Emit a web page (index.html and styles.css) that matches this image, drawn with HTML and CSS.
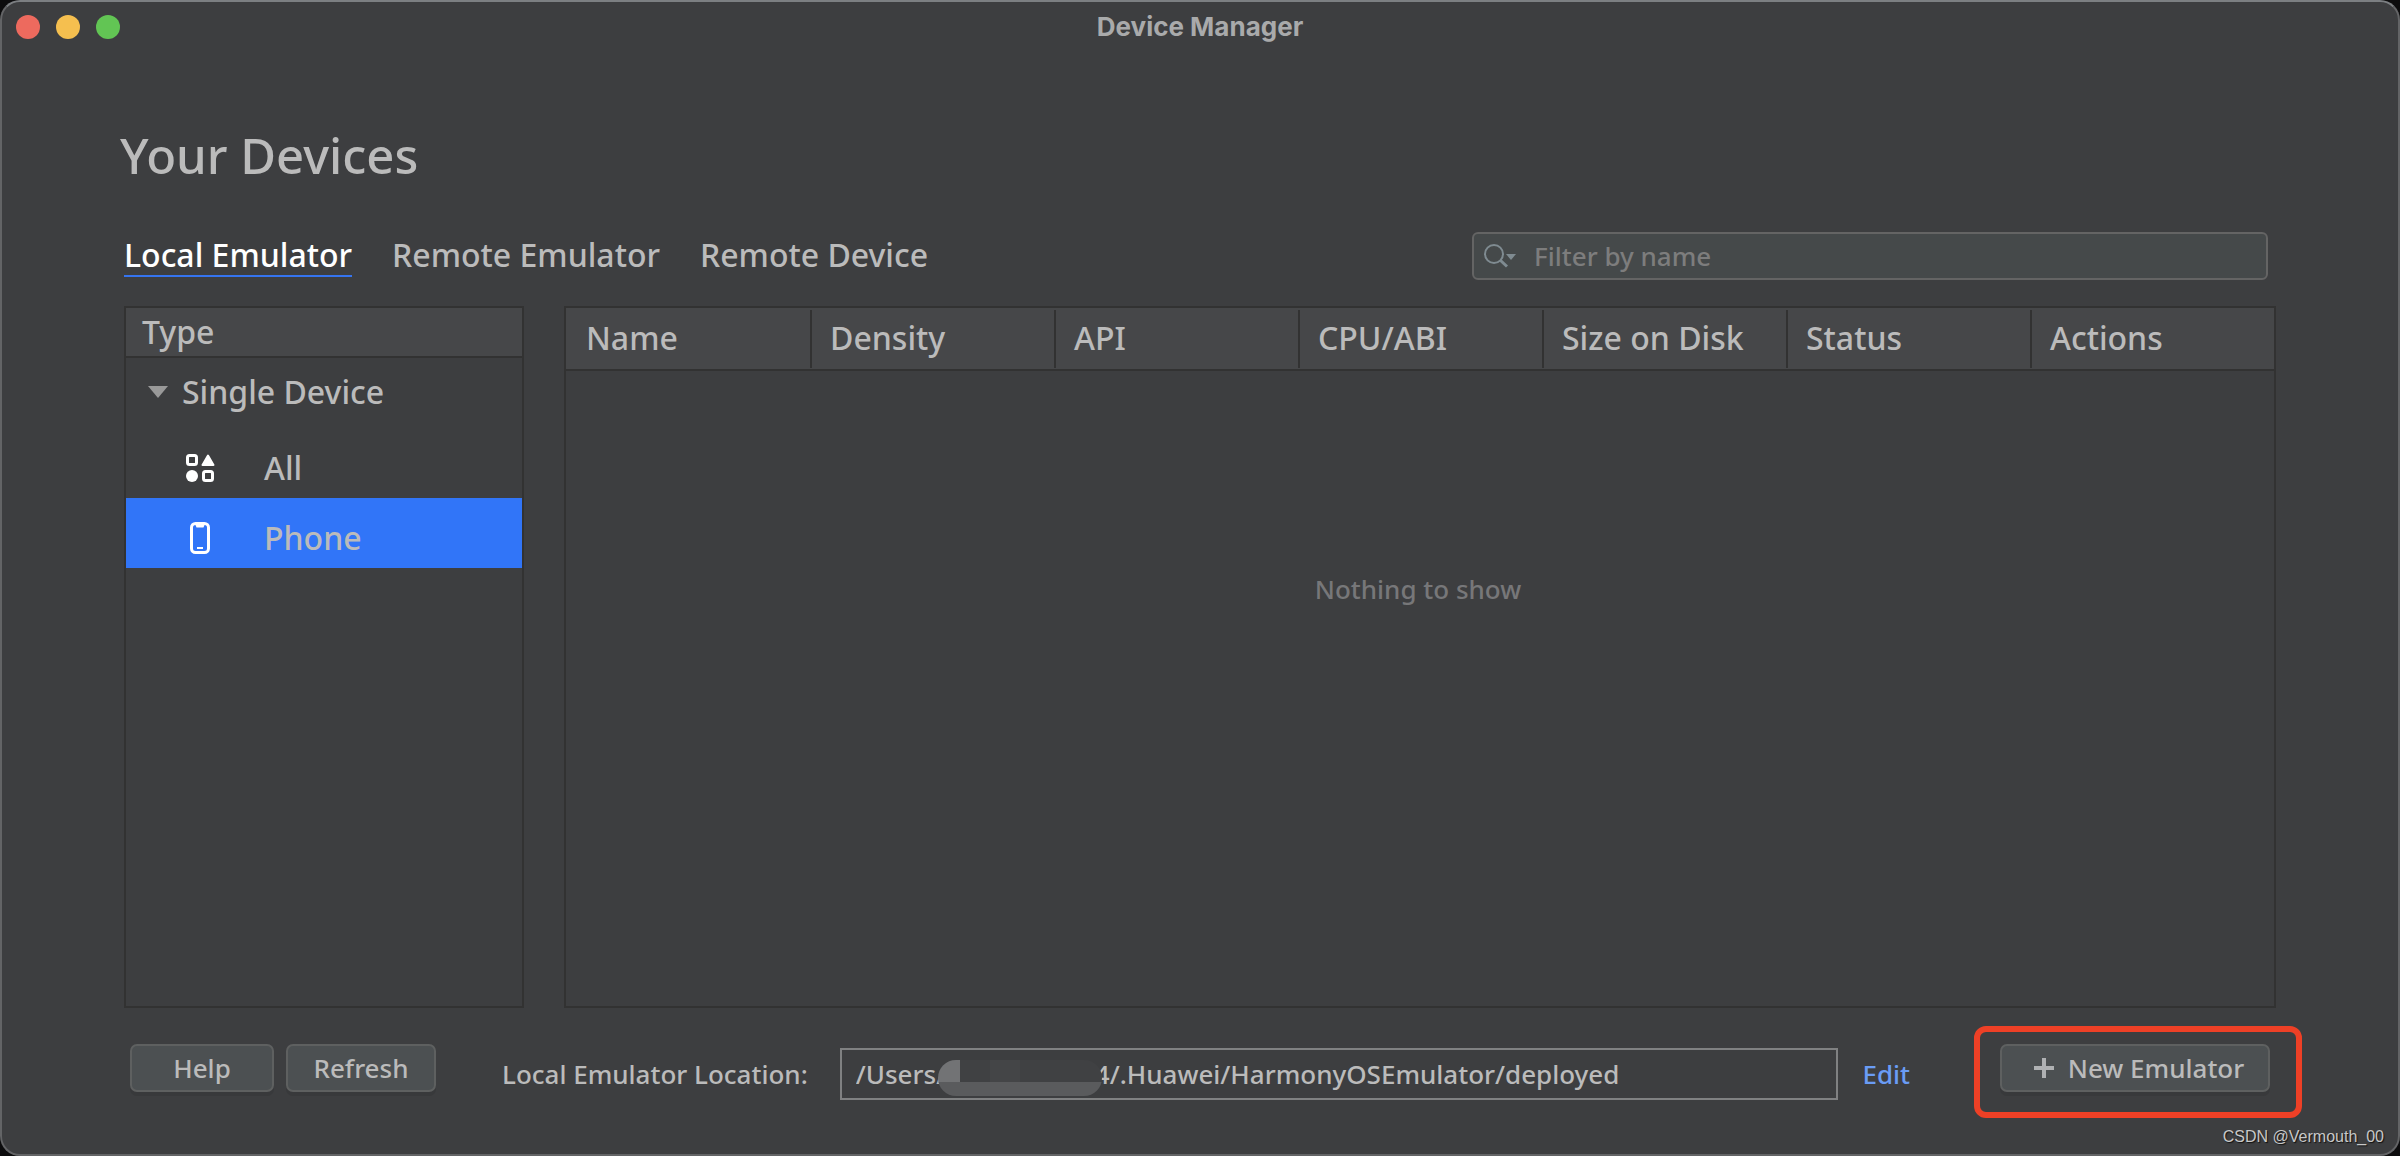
FILE: index.html
```html
<!DOCTYPE html>
<html lang="en">
<head>
<meta charset="utf-8">
<title>Device Manager</title>
<link rel="stylesheet" href="styles.css">
</head>
<body>
<div class="window">
  <header class="titlebar">
    <div class="lights">
      <button class="light light-close" aria-label="Close"></button>
      <button class="light light-min" aria-label="Minimize"></button>
      <button class="light light-max" aria-label="Zoom"></button>
    </div>
    <span class="title">Device Manager</span>
  </header>

  <main class="content">
    <h1 class="heading">Your Devices</h1>

    <div class="toolbar">
      <nav class="tabs">
        <a class="tab tab-active" href="#local">Local Emulator</a>
        <a class="tab" href="#remote">Remote Emulator</a>
        <a class="tab" href="#device">Remote Device</a>
      </nav>
      <label class="filter">
        <svg class="filter-icon" width="36" height="28" viewBox="0 0 36 28" aria-hidden="true">
          <circle cx="12" cy="12" r="9" fill="none" stroke="#7f8b91" stroke-width="2"/>
          <path d="M18 18l7 6.500" stroke="#7f8b91" stroke-width="3"/>
          <path d="M24 12h10l-5 6z" fill="#7f8b91"/>
        </svg>
        <input class="filter-input" type="text" placeholder="Filter by name" aria-label="Filter by name">
      </label>
    </div>

    <div class="panels">
      <aside class="types">
        <div class="types-head">Type</div>
        <button class="group">
          <svg width="20" height="12" viewBox="0 0 20 12" aria-hidden="true"><path d="M0 0h20L10 12z" fill="#999"/></svg>
          Single Device
        </button>
        <button class="type">
          <svg width="32" height="32" viewBox="0 0 32 32" aria-hidden="true">
            <rect x="3.500" y="3.500" width="9" height="9" rx="2" fill="none" stroke="#fff" stroke-width="3"/>
            <rect x="19.500" y="19.500" width="9" height="9" rx="2" fill="none" stroke="#fff" stroke-width="3"/>
            <circle cx="8" cy="24" r="6" fill="#fff"/>
            <path d="M24 3.500L29.500 13h-11z" fill="#fff" stroke="#fff" stroke-width="2" stroke-linejoin="round"/>
          </svg>
          All
        </button>
        <button class="type type-selected">
          <svg width="32" height="32" viewBox="0 0 32 32" aria-hidden="true">
            <rect x="7.500" y="1.500" width="17" height="29" rx="4" fill="none" stroke="#fff" stroke-width="3"/>
            <path d="M11 2h10l-1.500 3.500h-7z" fill="#fff"/>
            <path d="M13 26h6" stroke="#fff" stroke-width="2"/>
          </svg>
          Phone
        </button>
      </aside>

      <section class="devices">
        <table class="table">
          <thead>
            <tr>
              <th>Name</th><th>Density</th><th>API</th><th>CPU/ABI</th><th>Size on Disk</th><th>Status</th><th>Actions</th>
            </tr>
          </thead>
          <tbody>
            <tr><td class="empty" colspan="7">Nothing to show</td></tr>
          </tbody>
        </table>
      </section>
    </div>

    <footer class="footer">
      <button class="btn">Help</button>
      <button class="btn">Refresh</button>
      <label class="location-label" for="location">Local Emulator Location:</label>
      <div class="location">
        <input class="location-input" id="location" type="text" readonly value="/Users/&nbsp;&nbsp;&nbsp;&nbsp;&nbsp;&nbsp;&nbsp;&nbsp;&nbsp;&nbsp;&nbsp;&nbsp;&nbsp;&nbsp;&nbsp;&nbsp;&nbsp;&nbsp;&nbsp;&nbsp;&nbsp;&nbsp;4/.Huawei/HarmonyOSEmulator/deployed">
        <span class="mask"></span>
      </div>
      <a class="edit" href="#edit">Edit</a>
      <div class="callout">
        <button class="btn btn-new">
          <svg width="20" height="20" viewBox="0 0 20 20" aria-hidden="true"><path d="M10 0v20M0 10h20" stroke="#afb1b3" stroke-width="4"/></svg>
          New Emulator
        </button>
      </div>
    </footer>
  </main>
  <span class="watermark">CSDN @Vermouth_00</span>
</div>
</body>
</html>
```
FILE: styles.css
```css
* { box-sizing: border-box; }

body {
  margin: 0;
  background: #0c0c0d;
  color: #bbbbbb;
  font-family: "Noto Sans", sans-serif;
  font-size: 26px;
  font-weight: 500;
  line-height: 36px;
}

button, input { font: inherit; color: inherit; margin: 0; }

.window {
  position: relative;
  display: flex;
  flex-direction: column;
  min-height: 100vh;
  background: #3d3e40;
  border: 2px solid #636466;
  border-top-color: #7c7f82;
  border-radius: 20px;
}

.titlebar {
  display: grid;
  grid-template-columns: 1fr auto 1fr;
  align-items: center;
  height: 50px;
  padding: 0 14px;
}

.lights { display: flex; gap: 16px; }
.light { width: 24px; height: 24px; padding: 0; border: 0; border-radius: 50%; }
.light-close { background: #ed6a5e; }
.light-min { background: #f5bf4f; }
.light-max { background: #62c554; }

.title { font: bold 26px/30px Inter, sans-serif; color: #a9aaab; }

.content {
  flex: 1;
  display: flex;
  flex-direction: column;
  padding: 68px 122px 54px;
}

.heading { margin: 0 -4px; font-size: 49px; line-height: 70px; font-weight: 500; }

.toolbar {
  display: flex;
  justify-content: space-between;
  align-items: center;
  height: 48px;
  margin: 42px 8px 26px 0;
}

.tabs { display: flex; gap: 40px; font-size: 32px; line-height: 40px; }
.tab { color: inherit; text-decoration: none; border-bottom: 2px solid transparent; }
.tab-active { color: #fff; border-color: #3574f0; }

.filter {
  display: flex;
  align-items: center;
  width: 796px;
  height: 48px;
  padding-left: 8px;
  gap: 16px;
  background: #45494a;
  border: 2px solid #646464;
  border-radius: 6px;
}
.filter-input { flex: 1; min-width: 0; padding: 0; border: 0; outline: 0; background: none; }
.filter-input::placeholder { color: #7d7d7d; opacity: 1; }

.panels { flex: 1; display: flex; gap: 40px; }

.types {
  width: 400px;
  border: 2px solid #323232;
  font-size: 32px;
  line-height: 40px;
}
.types-head {
  height: 50px;
  padding: 4px 16px;
  background: #464749;
  border-bottom: 2px solid #323232;
}
.group, .type {
  display: flex;
  align-items: center;
  width: 100%;
  height: 70px;
  border: 0;
  background: none;
}
.group { padding: 0 22px 2px; gap: 14px; }
.type { padding: 10px 58px 0; gap: 48px; }
.type-selected { background: #3175f8; }

.devices { flex: 1; border: 2px solid #323232; }
.table { width: 100%; border-collapse: collapse; table-layout: fixed; }
.table th {
  height: 62px;
  padding: 0 20px 2px;
  background: #464749;
  border-bottom: 2px solid #323232;
  font-size: 32px;
  font-weight: 500;
  text-align: left;
}
.table th + th {
  background: linear-gradient(#323232, #323232) left center / 2px 58px no-repeat #464749;
}
.empty { padding: 200px 4px 0 0; text-align: center; color: #777779; }

.footer { display: flex; align-items: flex-start; padding: 36px 8px 0 6px; }

.btn {
  width: 144px;
  height: 48px;
  margin-right: 12px;
  padding: 0;
  color: #bbb;
  background: #4c5052;
  border: 2px solid #5e6060;
  border-radius: 7px;
  box-shadow: 0 4px 0 #38393b;
}
.btn + .btn { width: 150px; margin-right: 66px; }
.location-label { margin-top: 12px; margin-right: 32px; white-space: nowrap; }
.location { position: relative; flex: 1; margin-top: 4px; }
.location-input {
  display: block;
  width: 100%;
  height: 52px;
  padding: 0 14px;
  background: none;
  border: 2px solid #808182;
  outline: 0;
}
.mask {
  position: absolute;
  left: 98px;
  top: 12px;
  width: 164px;
  height: 36px;
  border-radius: 18px;
  background:
    linear-gradient(#727375, #727375) 0 0 / 22px 22px no-repeat,
    linear-gradient(#444547, #444547) 52px 0 / 30px 22px no-repeat,
    linear-gradient(#404143 22px, #5a5b5d 22px);
}
.edit { margin: 12px 64px 0 24px; color: #6a9cf5; text-decoration: none; }

.callout {
  margin: -18px -34px -26px 0;
  padding: 12px 26px 20px 20px;
  border: 6px solid #ee4026;
  border-radius: 12px;
}
.btn-new {
  display: flex;
  align-items: center;
  justify-content: center;
  gap: 14px;
  width: 270px;
  margin: 0;
  padding-left: 8px;
}

.watermark {
  position: absolute;
  right: 14px;
  bottom: 6px;
  font: 16px/22px "Liberation Sans", sans-serif;
  color: #c8c8c8;
  text-shadow: 1px 1px 1px #111;
}
```
